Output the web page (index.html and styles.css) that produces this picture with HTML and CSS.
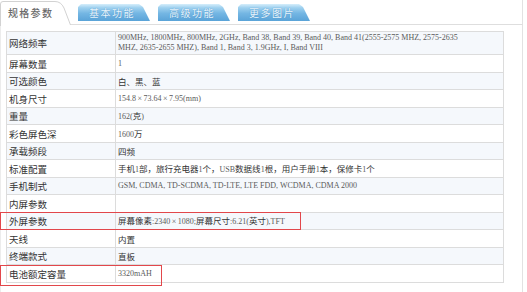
FILE: index.html
```html
<!DOCTYPE html>
<html lang="zh-CN">
<head>
<meta charset="utf-8">
<title>规格参数</title>
<link rel="stylesheet" href="styles.css">
</head>
<body>
<div class="page">
  <div class="tabs">
    <div class="tab-active">
      <svg class="tab-outline" width="71" height="26" viewBox="0 0 71 26" aria-hidden="true">
        <path d="M0.5 26 V4 Q0.5 1.5 3 1.5 H55 Q61 1.5 64 8 L70.5 25" fill="#fff" stroke="#d2d2d2" stroke-width="1"/>
      </svg>
      <span class="tab-active-label">规格参数</span>
    </div>
    <div class="tab-rest">
      <div class="tab">基本功能</div>
      <div class="tab">高级功能</div>
      <div class="tab">更多图片</div>
    </div>
  </div>
  <div class="panel">
    <table class="spec">
      <tr class="first"><th>网络频率</th><td class="en">900MHz, 1800MHz, 800MHz, 2GHz, Band 38, Band 39, Band 40, Band 41(2555-2575 MHZ, 2575-2635<br>MHZ, 2635-2655 MHZ), Band 1, Band 3, 1.9GHz, I, Band VIII</td></tr>
      <tr><th>屏幕数量</th><td class="en">1</td></tr>
      <tr><th>可选颜色</th><td>白、黑、蓝</td></tr>
      <tr><th>机身尺寸</th><td class="en">154.8<span class="x">×</span>73.64<span class="x">×</span>7.95(mm)</td></tr>
      <tr><th>重量</th><td><span class="en">162(</span>克<span class="en">)</span></td></tr>
      <tr><th>彩色屏色深</th><td><span class="en">1600</span>万</td></tr>
      <tr><th>承载频段</th><td>四频</td></tr>
      <tr><th>标准配置</th><td>手机<span class="en">1</span>部，旅行充电器<span class="en">1</span>个，<span class="en">USB</span>数据线<span class="en">1</span>根，用户手册<span class="en">1</span>本，保修卡<span class="en">1</span>个</td></tr>
      <tr><th>手机制式</th><td class="en">GSM, CDMA, TD-SCDMA, TD-LTE, LTE FDD, WCDMA, CDMA 2000</td></tr>
      <tr><th>内屏参数</th><td></td></tr>
      <tr><th>外屏参数</th><td>屏幕像素<span class="en">:2340<span class="x">×</span>1080;</span>屏幕尺寸<span class="en">:6.21(</span>英寸<span class="en">),TFT</span></td></tr>
      <tr><th>天线</th><td>内置</td></tr>
      <tr><th>终端款式</th><td>直板</td></tr>
      <tr><th>电池额定容量</th><td class="en">3320mAH</td></tr>
    </table>
  </div>
  <div class="mark mark-screen"></div>
  <div class="mark mark-battery"></div>
</div>
</body>
</html>
```
FILE: styles.css
```css
html, body {
  margin: 0;
  padding: 0;
  background: #fff;
}

.page {
  position: relative;
  width: 527px;
  height: 292px;
  overflow: hidden;
  font-family: "Noto Sans CJK SC", "Liberation Sans", sans-serif;
  color: #333;
}

.tabs {
  display: flex;
  height: 25px;
}

.tab-active {
  position: relative;
  width: 70px;
  height: 25px;
  flex: none;
}

.tab-outline {
  position: absolute;
  left: 0;
  top: 0;
}

.tab-active-label {
  position: relative;
  display: block;
  padding: 6px 0 0 8px;
  font-size: 10px;
  line-height: 13px;
  letter-spacing: 1.3px;
  color: #6a6a6a;
  font-weight: 500;
}

.tab-rest {
  flex: 1;
  display: flex;
  align-items: flex-start;
  gap: 8px;
  padding: 4px 0 0 8px;
  border-bottom: 1px solid #dedede;
  border-right: 1px solid #e2e2e2;
  margin-right: 4px;
}

.tab {
  width: 72px;
  height: 17px;
  box-sizing: border-box;
  padding: 2px 0 0 11px;
  font-size: 10px;
  line-height: 13px;
  letter-spacing: 1.5px;
  color: #eaf6fd;
  text-shadow: 0 0 1px #3b84bd;
  background: linear-gradient(#d6eefb 0%, #9fd1ef 22%, #74b6e3 55%, #5aa3d8 100%);
  clip-path: polygon(0 3px, 3px 0, calc(100% - 11px) 0, calc(100% - 7px) 3px, 100% 100%, 0 100%);
}

.panel {
  height: 267px;
  margin-right: 4px;
  box-sizing: border-box;
  padding: 6px 0 0 5px;
  border-left: 1px solid #ececec;
  border-right: 1px solid #e2e2e2;
}

.spec {
  width: 498px;
  border-collapse: collapse;
  table-layout: fixed;
}

.spec th,
.spec td {
  border: 1px solid #dcdcdc;
  height: 16px;
  padding: 0 0 0 2px;
  line-height: 12px;
  text-align: left;
  vertical-align: middle;
  white-space: nowrap;
  overflow: hidden;
}

.spec th {
  width: 106px;
  font-size: 9.5px;
  font-weight: 400;
  color: #333;
}

.spec td {
  font-size: 8.5px;
  color: #333;
}

.spec tr:nth-child(even) th,
.spec tr:nth-child(even) td {
  height: 17px;
}

.spec tr:nth-child(odd) th,
.spec tr:nth-child(odd) td {
  background: #f5f8fc;
}

.spec tr.first th,
.spec tr.first td {
  height: 22px;
}

.spec tr.first td {
  line-height: 10px;
}

.spec .en {
  font-family: "Liberation Serif", "Noto Sans CJK SC", serif;
  font-size: 8px;
  color: #5a5a5a;
}

.spec .x {
  padding: 0 1.5px;
}

.mark {
  position: absolute;
  left: 0;
  box-sizing: border-box;
  border: 1px solid #e2474b;
}

.mark-screen {
  top: 212px;
  width: 301px;
  height: 18px;
}

.mark-battery {
  top: 265px;
  width: 162px;
  height: 21px;
}
```
